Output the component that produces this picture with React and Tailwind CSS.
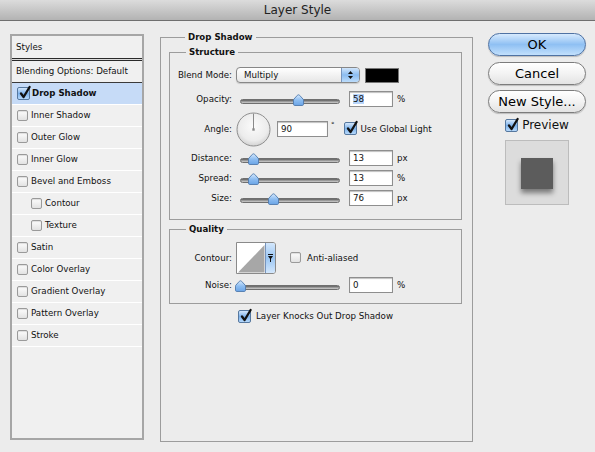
import React from "react";

function Unchecked() {
  return (
    <span className="inline-block shrink-0 w-[11px] h-[11px] rounded-[2px] border border-[#9a9a9a] bg-gradient-to-b from-[#fdfdfd] to-[#e2e2e2] shadow-[inset_0_1px_1px_rgba(0,0,0,0.12)]" />
  );
}

function Checked() {
  return (
    <span className="relative inline-block shrink-0 w-[13px] h-[13px] rounded-[2px] border border-[#56789f] bg-gradient-to-b from-[#d4e7fb] via-[#7db2eb] to-[#b5d8fb]">
      <svg className="absolute left-[0px] top-[-3px]" width="14" height="15" viewBox="0 0 14 15">
        <path d="M3 8.5 L5.6 12 L11.6 2" stroke="#111" strokeWidth="2.3" fill="none" strokeLinecap="round" strokeLinejoin="round" />
      </svg>
    </span>
  );
}

function ListRow({ label, checked, indent, bold, selected }) {
  return (
    <div
      className={
        "h-[22px] flex items-center border-b border-white " +
        (indent ? "pl-[19px] " : "pl-[5px] ") +
        (selected ? "bg-[#c6dbf7]" : "")
      }
    >
      {checked ? <Checked /> : <Unchecked />}
      <span className={(checked ? "ml-[2px] " : "ml-[3px] ") + (bold ? "font-bold text-[8.6px]" : "")}>{label}</span>
    </div>
  );
}

function Thumb({ pos }) {
  return (
    <svg className="absolute top-[3px]" style={{ left: pos - 5 }} width="11" height="12" viewBox="0 0 11 12">
      <defs>
        <linearGradient id={"tg" + pos} x1="0" y1="0" x2="0" y2="1">
          <stop offset="0" stopColor="#d6e9fd" />
          <stop offset="0.5" stopColor="#8dbdf1" />
          <stop offset="1" stopColor="#6aa4e6" />
        </linearGradient>
      </defs>
      <path
        d="M5.5 0.8 C6 0.8 6.3 1 6.6 1.3 L10 5 C10.3 5.3 10.5 5.7 10.5 6.2 L10.5 10.3 C10.5 11 10 11.5 9.3 11.5 L1.7 11.5 C1 11.5 0.5 11 0.5 10.3 L0.5 6.2 C0.5 5.7 0.7 5.3 1 5 L4.4 1.3 C4.7 1 5 0.8 5.5 0.8 Z"
        fill={"url(#tg" + pos + ")"}
        stroke="#4f79ad"
        strokeWidth="0.9"
      />
    </svg>
  );
}

function Slider({ pos }) {
  return (
    <div className="relative w-[100px] h-[16px] ml-[8px] pt-[8px]">
      <div className="h-[5px] rounded-full border border-[#6f6f6f] bg-gradient-to-b from-[#5e5e5e] via-[#9a9a9a] to-[#d0d0d0]" />
      <Thumb pos={pos} />
    </div>
  );
}

function Field({ value, w = "w-[44px]", ml = "ml-[9px]", selected }) {
  return (
    <div className={ml + " " + w + " h-[16px] bg-white border border-[#8e8e8e] shadow-[inset_0_1px_1px_rgba(0,0,0,0.25)] flex items-center pl-[3px]"}>
      {selected ? <span className="bg-[#b7d5fb] py-[1px]">{value}</span> : value}
    </div>
  );
}

function Label({ children }) {
  return <div className="w-[62px] text-right shrink-0">{children}</div>;
}

function SliderRow({ label, pos, value, unit, mt, selected }) {
  return (
    <div className={"flex items-center h-[16px] " + mt}>
      <Label>{label}</Label>
      <Slider pos={pos} />
      <Field value={value} selected={selected} />
      <span className="ml-[4px]">{unit}</span>
    </div>
  );
}

function Button({ children, primary, mt }) {
  return (
    <div
      className={
        "h-[23px] rounded-full flex items-center justify-center text-[13px] text-black shadow-[0_1px_1px_rgba(0,0,0,0.2)] " +
        (primary
          ? "border border-[#4f72a3] bg-gradient-to-b from-[#d7eafd] via-[#8fc0f3] to-[#c2e0fc] "
          : "border border-[#7c7c7c] bg-gradient-to-b from-[#ffffff] via-[#f3f3f3] to-[#e3e3e3] ") +
        mt
      }
    >
      {children}
    </div>
  );
}

export default function App() {
  return (
    <div className="w-[595px] h-[452px] overflow-hidden bg-[#ececec] text-[#111] text-[8.7px] leading-none font-['DejaVu_Sans','Lucida_Grande',sans-serif]">
      <div className="h-[21px] flex items-center justify-center border-b border-[#6f6f6f] bg-gradient-to-b from-[#dcdcdc] to-[#b3b3b3] text-[12px] text-[#222]">
        Layer Style
      </div>

      <div className="flex pl-[10px]">
        {/* Left styles list */}
        <div className="mt-[13px] w-[134px] h-[406px] border-2 border-[#a6a6a6] bg-[#f0f0f0] flex flex-col">
          <div className="h-[22px] flex items-center pl-[4px]">Styles</div>
          <div className="h-[3px] border-t border-b border-[#2a2a2a] bg-[#dcdcdc]" />
          <div className="h-[22px] flex items-center pl-[4px] border-b border-[#3a3a3a]">Blending Options: Default</div>
          <ListRow label="Drop Shadow" checked bold selected />
          <ListRow label="Inner Shadow" />
          <ListRow label="Outer Glow" />
          <ListRow label="Inner Glow" />
          <ListRow label="Bevel and Emboss" />
          <ListRow label="Contour" indent />
          <ListRow label="Texture" indent />
          <ListRow label="Satin" />
          <ListRow label="Color Overlay" />
          <ListRow label="Gradient Overlay" />
          <ListRow label="Pattern Overlay" />
          <ListRow label="Stroke" />
        </div>

        {/* Middle settings */}
        <fieldset className="ml-[16px] mt-[10px] w-[313px] h-[411px] border border-[#9c9c9c] px-[8px]">
          <legend className="ml-[16px] px-[3px] font-bold text-[8.6px] leading-[12px]">Drop Shadow</legend>

          <fieldset className="mt-[3px] w-[293px] border border-[#9c9c9c] pb-[13px]">
            <legend className="ml-[16px] px-[3px] font-bold text-[8.6px] leading-[12px]">Structure</legend>

            <div className="flex items-center h-[16px] mt-[9px]">
              <Label>Blend Mode:</Label>
              <div className="ml-[4px] w-[124px] h-[16px] flex rounded-[4px] border border-[#878787] overflow-hidden bg-gradient-to-b from-white to-[#e6e6e6] shadow-[0_1px_1px_rgba(0,0,0,0.15)]">
                <div className="flex-1 pl-[7px] flex items-center">Multiply</div>
                <div className="w-[18px] border-l border-[#7895bd] bg-gradient-to-b from-[#d0e5fb] via-[#8bbcf0] to-[#bcdcfb] flex flex-col items-center justify-center gap-[2px]">
                  <svg width="5" height="3" viewBox="0 0 5 3"><path d="M2.5 0 L5 3 L0 3 Z" fill="#111" /></svg>
                  <svg width="5" height="3" viewBox="0 0 5 3"><path d="M0 0 L5 0 L2.5 3 Z" fill="#111" /></svg>
                </div>
              </div>
              <div className="ml-[5px] w-[34px] h-[15px] bg-black border border-[#777]" />
            </div>

            <SliderRow label="Opacity:" pos={58} value="58" unit="%" mt="mt-[8px]" selected />

            <div className="flex items-center h-[34px] mt-[5px]">
              <Label>Angle:</Label>
              <svg className="ml-[4px]" width="35" height="35" viewBox="0 0 35 35">
                <defs>
                  <radialGradient id="dial" cx="50%" cy="40%" r="62%">
                    <stop offset="0" stopColor="#fbfbfb" />
                    <stop offset="0.7" stopColor="#ececec" />
                    <stop offset="1" stopColor="#cfcfcf" />
                  </radialGradient>
                </defs>
                <circle cx="17.5" cy="17.5" r="16.5" fill="url(#dial)" stroke="#8f8f8f" strokeWidth="1" />
                <line x1="17.5" y1="17.5" x2="17.5" y2="1.5" stroke="#8a8a8a" strokeWidth="1" />
                <rect x="16.3" y="16.3" width="2.4" height="2.4" fill="#8a8a8a" />
              </svg>
              <Field value="90" w="w-[51px]" ml="ml-[6px]" />
              <span className="ml-[3px] self-start mt-[10px] text-[7px]">°</span>
              <span className="ml-[9px]"><Checked /></span>
              <span className="ml-[4px]">Use Global Light</span>
            </div>

            <SliderRow label="Distance:" pos={13} value="13" unit="px" mt="mt-[4px]" />
            <SliderRow label="Spread:" pos={13} value="13" unit="%" mt="mt-[4px]" />
            <SliderRow label="Size:" pos={33} value="76" unit="px" mt="mt-[4px]" />
          </fieldset>

          <fieldset className="mt-[3px] w-[293px] border border-[#9c9c9c] pb-[10px]">
            <legend className="ml-[16px] px-[3px] font-bold text-[8.6px] leading-[12px]">Quality</legend>

            <div className="flex items-center h-[32px] mt-[7px]">
              <Label>Contour:</Label>
              <div className="ml-[4px] w-[40px] h-[32px] flex border border-[#8a8a8a] rounded-r-[3px] overflow-hidden bg-white">
                <svg width="28" height="30" viewBox="0 0 28 30">
                  <polygon points="1,29.5 27.5,2 27.5,29.5" fill="#a7a7a7" />
                </svg>
                <div className="flex-1 border-l border-[#7895bd] bg-gradient-to-b from-[#d3e7fc] via-[#9bc6f3] to-[#d3e7fc] flex items-center justify-center">
                  <svg width="5" height="8" viewBox="0 0 5 8">
                    <rect x="0" y="0" width="5" height="1" fill="#111" />
                    <path d="M0 2 L5 2 L2.5 5.5 Z" fill="#111" />
                    <rect x="2" y="4" width="1" height="4" fill="#111" />
                  </svg>
                </div>
              </div>
              <span className="ml-[14px]"><Unchecked /></span>
              <span className="ml-[6px]">Anti-aliased</span>
            </div>

            <SliderRow label="Noise:" pos={0} value="0" unit="%" mt="mt-[3px]" />
          </fieldset>

          <div className="flex items-center justify-center h-[14px] mt-[5px] pr-[2px]">
            <Checked />
            <span className="ml-[5px]">Layer Knocks Out Drop Shadow</span>
          </div>
        </fieldset>

        {/* Right buttons */}
        <div className="ml-[15px] mt-[12px] w-[98px] flex flex-col">
          <Button primary mt="">OK</Button>
          <Button mt="mt-[6px]">Cancel</Button>
          <Button mt="mt-[5px]">New Style...</Button>
          <div className="mt-[5px] h-[14px] flex items-center justify-center">
            <Checked />
            <span className="ml-[4px] text-[12px]">Preview</span>
          </div>
          <div className="mt-[8px] self-center w-[64px] h-[65px] border border-[#bcbcbc] bg-[#dcdcdc] flex justify-center pt-[17px]">
            <div className="w-[32px] h-[31px] bg-[#5c5c5c] shadow-[0_4px_5px_rgba(0,0,0,0.45)]" />
          </div>
        </div>
      </div>
    </div>
  );
}
